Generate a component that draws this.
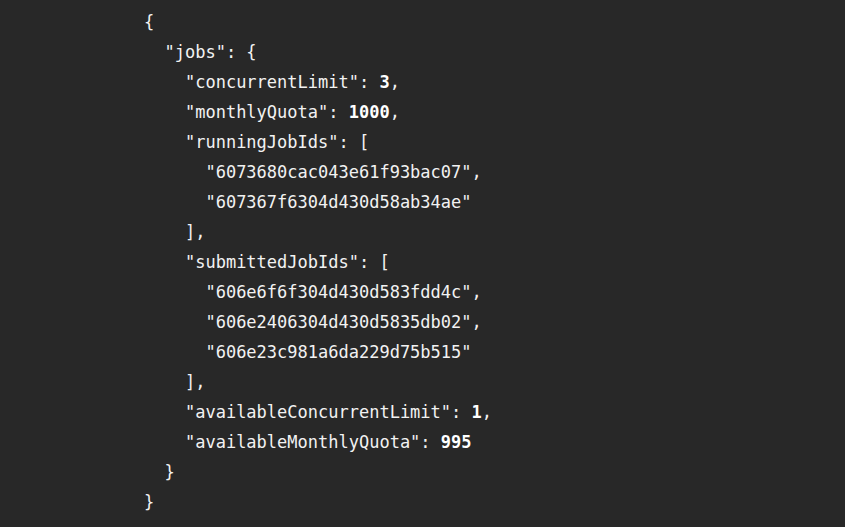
type Tok = string | { n: string };

const lines: { indent: number; parts: Tok[] }[] = [
  { indent: 0, parts: ["{"] },
  { indent: 1, parts: ['"jobs": {'] },
  { indent: 2, parts: ['"concurrentLimit": ', { n: "3" }, ","] },
  { indent: 2, parts: ['"monthlyQuota": ', { n: "1000" }, ","] },
  { indent: 2, parts: ['"runningJobIds": ['] },
  { indent: 3, parts: ['"6073680cac043e61f93bac07",'] },
  { indent: 3, parts: ['"607367f6304d430d58ab34ae"'] },
  { indent: 2, parts: ["],"] },
  { indent: 2, parts: ['"submittedJobIds": ['] },
  { indent: 3, parts: ['"606e6f6f304d430d583fdd4c",'] },
  { indent: 3, parts: ['"606e2406304d430d5835db02",'] },
  { indent: 3, parts: ['"606e23c981a6da229d75b515"'] },
  { indent: 2, parts: ["],"] },
  { indent: 2, parts: ['"availableConcurrentLimit": ', { n: "1" }, ","] },
  { indent: 2, parts: ['"availableMonthlyQuota": ', { n: "995" }] },
  { indent: 1, parts: ["}"] },
  { indent: 0, parts: ["}"] },
];

export default function App() {
  return (
    <div className="w-[845px] h-[527px] bg-[#282828] overflow-hidden">
      <pre className="pt-[7px] pl-[144px] text-[17px] leading-[30px] text-[#f2f2f2] font-['DejaVu_Sans_Mono',monospace]">
        {lines.map((line, i) => (
          <div key={i}>
            {"  ".repeat(line.indent)}
            {line.parts.map((p, j) =>
              typeof p === "string" ? (
                <span key={j}>{p}</span>
              ) : (
                <span key={j} className="font-bold text-white">
                  {p.n}
                </span>
              )
            )}
          </div>
        ))}
      </pre>
    </div>
  );
}
